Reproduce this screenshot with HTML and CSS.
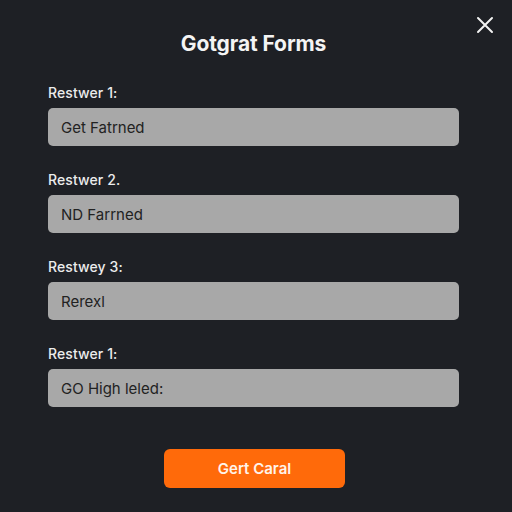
FILE: index.html
```html
<!DOCTYPE html>
<html lang="en">
<head>
<meta charset="utf-8">
<title>Gotgrat Forms</title>
<link rel="stylesheet" href="styles.css">
</head>
<body>
<div class="dialog">
  <button class="close" aria-label="Close">
    <svg width="18" height="18" viewBox="0 0 18 18"><path d="M2 2 L16 16 M16 2 L2 16" stroke="#f2f2f2" stroke-width="2" stroke-linecap="round" fill="none"/></svg>
  </button>
  <h1 class="title">Gotgrat Forms</h1>
  <form class="form">
    <div class="field">
      <label class="label">Restwer 1:</label>
      <div class="input">Get Fatrned</div>
    </div>
    <div class="field">
      <label class="label">Restwer 2.</label>
      <div class="input">ND Farrned</div>
    </div>
    <div class="field">
      <label class="label">Restwey 3:</label>
      <div class="input">Rerexl</div>
    </div>
    <div class="field">
      <label class="label">Restwer 1:</label>
      <div class="input">GO High leled:</div>
    </div>
    <div class="actions">
      <button type="button" class="submit">Gert Caral</button>
    </div>
  </form>
</div>
</body>
</html>
```

FILE: styles.css
```css
* { box-sizing: border-box; }
html, body {
  margin: 0;
  height: 100%;
  background: #1e2025;
}
body {
  font-family: Inter, "Noto Sans", "Liberation Sans", sans-serif;
  color: #ececec;
}
.dialog {
  position: relative;
  height: 512px;
  padding: 30px 53px 0 48px;
}
.close {
  position: absolute;
  top: 16px;
  right: 18px;
  width: 18px;
  height: 18px;
  padding: 0;
  border: 0;
  background: none;
  display: flex;
}
.title {
  margin: 0 0 25px;
  text-align: center;
  font-size: 21px;
  line-height: 28px;
  font-weight: 700;
  color: #f4f4f4;
  letter-spacing: -0.1px;
}
.form {
  display: flex;
  flex-direction: column;
  gap: 24px;
}
.field {
  display: flex;
  flex-direction: column;
  gap: 5px;
}
.label {
  font-size: 14px;
  line-height: 20px;
  font-weight: 500;
  letter-spacing: 0.1px;
  color: #ececec;
}
.input {
  height: 38px;
  border-radius: 5px;
  background: #a8a8a8;
  padding: 0 13px;
  display: flex;
  align-items: center;
  font-size: 15px;
  color: #222222;
}
.actions {
  display: flex;
  justify-content: center;
  margin-top: 18px;
  padding-left: 2px;
}
.submit {
  width: 181px;
  height: 39px;
  border: 0;
  border-radius: 6px;
  background: #ff6a0a;
  color: #fff4ea;
  font-family: Inter, "Noto Sans", "Liberation Sans", sans-serif;
  font-size: 15px;
  font-weight: 600;
}
```
